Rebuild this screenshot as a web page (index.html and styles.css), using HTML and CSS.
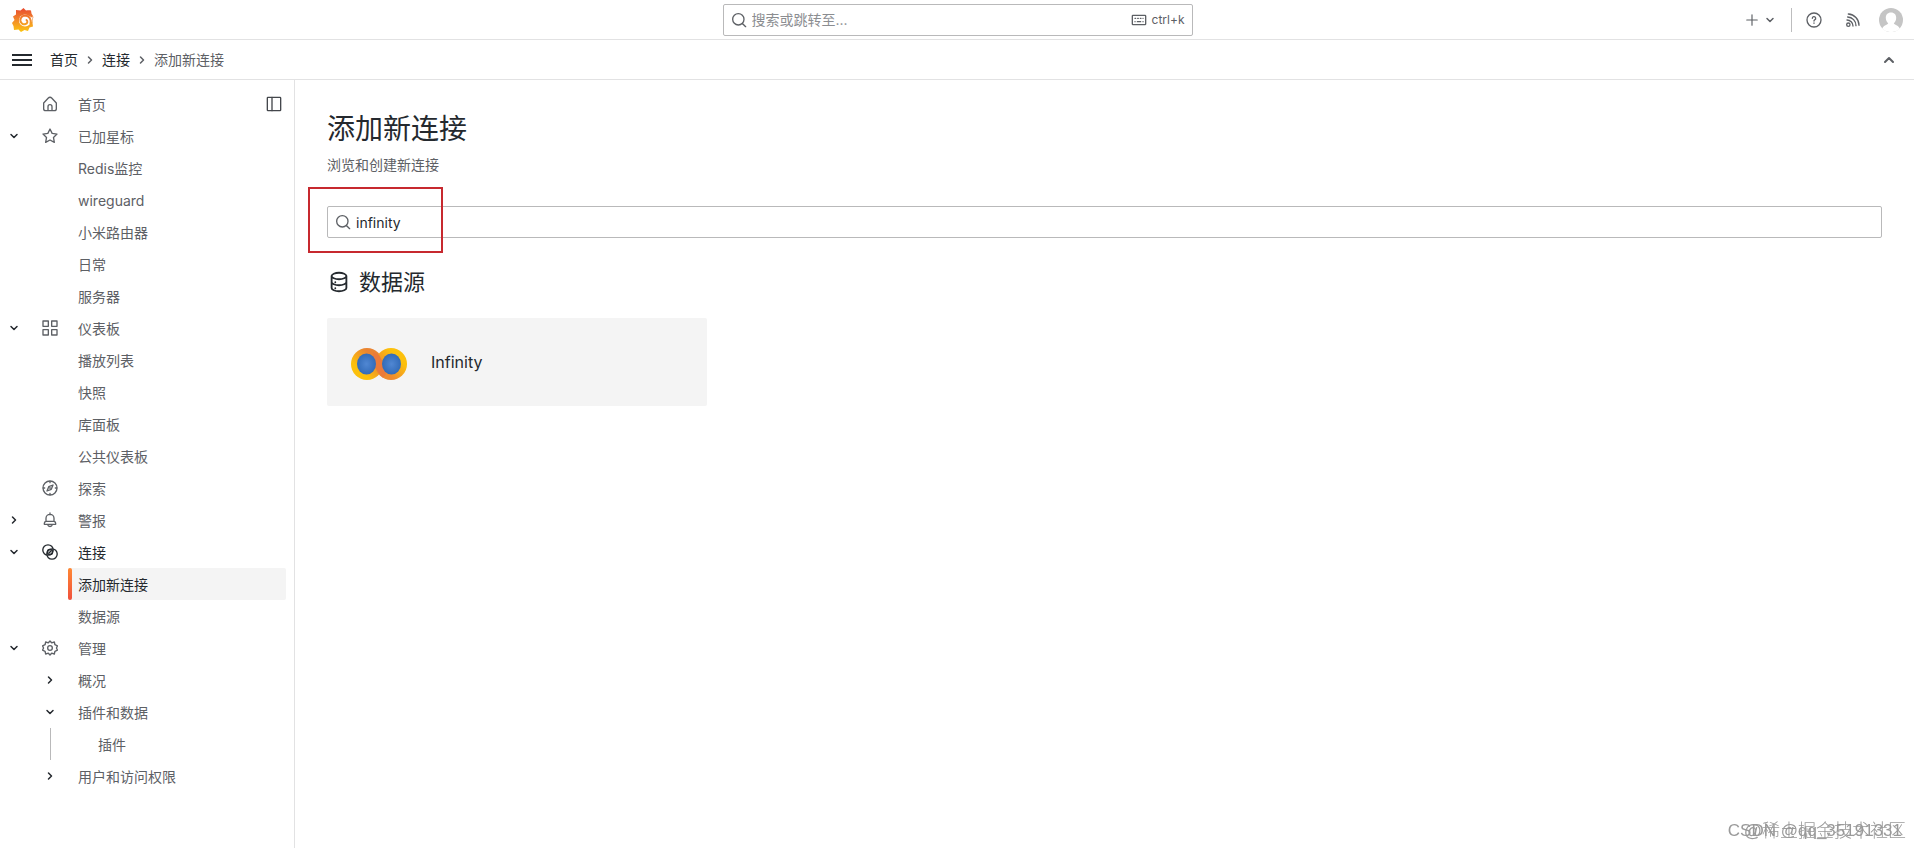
FILE: index.html
```html
<!DOCTYPE html>
<html lang="zh-CN">

<head>
	<meta charset="utf-8">
	<title>添加新连接 - 连接 - Grafana</title>
	<link rel="stylesheet" href="styles.css">
</head>

<body>
	<svg class="defs" aria-hidden="true">
		<symbol id="down" viewBox="0 0 16 16"><path d="M5 6.500L8 9.500l3-3"/></symbol>
		<symbol id="right" viewBox="0 0 16 16"><path d="M6.500 5L9.500 8l-3 3"/></symbol>
		<symbol id="search" viewBox="0 0 24 24"><circle cx="11" cy="11" r="8.500"/><path d="M17.500 17.500L22 22"/></symbol>
		<symbol id="home" viewBox="0 0 24 24"><path d="M2.500 10.500L9.500 3a3.400 3.400 0 0 1 5 0l7 7.500V19a3 3 0 0 1-3 3h-13a3 3 0 0 1-3-3zM9 22v-6a3 3 0 0 1 6 0v6"/></symbol>
		<symbol id="star" viewBox="0 0 24 24"><path d="M12 1.500l3.200 6.600 7.300 1-5.300 5.100 1.300 7.300-6.500-3.500-6.500 3.500 1.300-7.300-5.300-5.100 7.300-1z"/></symbol>
		<symbol id="apps" viewBox="0 0 24 24"><path d="M1.500 1.500h8v8h-8zM14.500 1.500h8v8h-8zM1.500 14.500h8v8h-8zM14.500 14.500h8v8h-8z"/></symbol>
		<symbol id="compass" viewBox="0 0 24 24"><circle cx="12" cy="12" r="10.500"/><path d="M16.500 7.500l-2.600 6.400-6.400 2.600 2.600-6.400zM12 2v2M12 20v2M2 12h2M20 12h2M11.500 12h1"/></symbol>
		<symbol id="bell" viewBox="0 0 24 24"><path d="M12 1.500V4M6 14V9.500a6 6 0 0 1 12 0V14M6 14a3 3 0 0 0-2.500 3v1.500h17V17a3 3 0 0 0-2.500-3zM6 14h12M8.500 19a3.600 3.600 0 0 0 7 0"/></symbol>
		<symbol id="link" viewBox="0 0 24 24"><circle cx="9" cy="9" r="7.800"/><circle cx="15" cy="15" r="7.800"/><circle cx="12" cy="12" r="3.800"/><path d="M10.500 13.500l3-3"/></symbol>
		<symbol id="cog" viewBox="0 0 24 24"><path d="M9.500 4.200L12 1.500l2.500 2.700 4-1.200.9 4.100 3.800 1.700-1.500 3.200 1.500 3.200-3.800 1.700-.9 4.100-4-1.200-2.500 2.700-2.500-2.700-4 1.200-.9-4.100-3.800-1.700L2.300 12 .8 8.800l3.800-1.700.9-4.100z"/><circle cx="12" cy="12" r="3.500"/></symbol>
		<symbol id="database" viewBox="-1 -1 26 26"><path d="M4 5.500C4 3.600 7.600 2 12 2s8 1.600 8 3.500v13c0 1.900-3.600 3.500-8 3.500s-8-1.600-8-3.500zM4 5.500C4 7.400 7.600 9 12 9s8-1.600 8-3.500M4 12c0 1.900 3.600 3.500 8 3.500s8-1.600 8-3.500M8 12.200v.1M8 18.700v.1"/></symbol>
	</svg>

	<header>
		<div class="topbar">
			<a class="logo" href="#" aria-label="Grafana">
				<svg viewBox="0 0 44 48">
					<defs>
						<linearGradient id="flame" x1="0" y1="48" x2="0" y2="0" gradientUnits="userSpaceOnUse">
							<stop offset="0" stop-color="#fcc50f"/>
							<stop offset=".5" stop-color="#f28a2b"/>
							<stop offset="1" stop-color="#e8492f"/>
						</linearGradient>
					</defs>
					<path fill="url(#flame)" d="M23 0l5 5c4-1 7-1 10 0l1 6c2 3 4 6 4 10-1-3-2-4-3-5 2 6 2 11 1 14l1 7-7 2-3 7-7-2-7 4-5-5-9 1-1-8-3-6 5-6-3-7 6-4V4l9 1z"/>
					<circle cx="26" cy="25" r="12" fill="#fff"/>
					<path fill="#fff" d="M36 17l4 2 1 8-4 2z"/>
					<path class="curl" d="M37 31c2-8-2-15-10-16-7 0-11 5-10 11 1 5 6 8 10 6 4-1 5-6 2-8"/>
				</svg>
			</a>
			<label class="search jump">
				<svg class="icon"><use href="#search"/></svg>
				<input type="text" placeholder="搜索或跳转至..." aria-label="搜索或跳转至">
				<svg class="icon keyboard" viewBox="0 0 24 24"><rect x="2" y="5" width="20" height="14" rx="1"/><path d="M6 9.500h1M10 9.500h1M14 9.500h1M18 9.500h.1M6 14.500h.1M9.500 14.500h5M18 14.500h.1"/></svg>
				<kbd>ctrl+k</kbd>
			</label>
			<div class="actions">
				<button class="new" aria-label="新建">
					<svg class="icon" viewBox="0 0 24 24"><path d="M12 3v18M3 12h18"/></svg>
					<svg class="chevron"><use href="#down"/></svg>
				</button>
				<button class="help" aria-label="帮助">
					<svg class="icon" viewBox="0 0 24 24"><circle cx="12" cy="12" r="10.500"/><path d="M9.500 9.500a2.500 2.500 0 1 1 3.500 2.300q-1 .5-1 1.700M12 16.500v.5"/></svg>
				</button>
				<button class="news" aria-label="新闻">
					<svg class="icon" viewBox="0 0 24 24"><circle cx="5" cy="19" r="2.500"/><path d="M3 12a9 9 0 0 1 9 9M4 7.500A13 13 0 0 1 16.500 20.500M5 3a17 17 0 0 1 16 17"/></svg>
				</button>
				<button class="avatar" aria-label="个人资料">
					<svg viewBox="0 0 24 24"><circle cx="12" cy="12" r="12" fill="#c5c5c5"/><path fill="#fff" d="M12 4.500c-3.500 0-5.200 2.500-5.200 5.200 0 2.300 1 4.300 2.400 5.500-.4 1.800-4.700 1.700-6 5.600A12 12 0 0 0 12 24a12 12 0 0 0 8.800-3.200c-1.300-3.900-5.600-3.800-6-5.600 1.400-1.200 2.400-3.200 2.400-5.500 0-2.700-1.700-5.200-5.200-5.200z"/></svg>
				</button>
			</div>
		</div>
		<div class="crumbbar">
			<button class="menu" aria-label="菜单"><span></span><span></span><span></span></button>
			<nav class="crumbs" aria-label="导航路径">
				<a href="#">首页</a>
				<svg class="chevron"><use href="#right"/></svg>
				<a href="#">连接</a>
				<svg class="chevron"><use href="#right"/></svg>
				<span>添加新连接</span>
			</nav>
			<button class="collapse" aria-label="收起">
				<svg class="chevron" viewBox="0 0 16 16"><path d="M4 10l4-4 4 4"/></svg>
			</button>
		</div>
	</header>

	<div class="page">
		<nav class="sidebar" aria-label="主菜单">
			<ul>
				<li class="item">
					<svg class="icon"><use href="#home"/></svg>
					<a href="#">首页</a>
					<button class="dock" aria-label="取消停靠菜单">
						<svg class="icon" viewBox="0 0 24 24"><rect x="2" y="2" width="20" height="20" rx="1"/><path d="M9 2v20"/></svg>
					</button>
				</li>
				<li class="item">
					<button class="toggle" aria-label="收起已加星标"><svg class="chevron"><use href="#down"/></svg></button>
					<svg class="icon"><use href="#star"/></svg>
					<a href="#">已加星标</a>
				</li>
				<li class="item"><a href="#">Redis监控</a></li>
				<li class="item"><a href="#">wireguard</a></li>
				<li class="item"><a href="#">小米路由器</a></li>
				<li class="item"><a href="#">日常</a></li>
				<li class="item"><a href="#">服务器</a></li>
				<li class="item">
					<button class="toggle" aria-label="收起仪表板"><svg class="chevron"><use href="#down"/></svg></button>
					<svg class="icon"><use href="#apps"/></svg>
					<a href="#">仪表板</a>
				</li>
				<li class="item"><a href="#">播放列表</a></li>
				<li class="item"><a href="#">快照</a></li>
				<li class="item"><a href="#">库面板</a></li>
				<li class="item"><a href="#">公共仪表板</a></li>
				<li class="item">
					<svg class="icon"><use href="#compass"/></svg>
					<a href="#">探索</a>
				</li>
				<li class="item">
					<button class="toggle" aria-label="展开警报"><svg class="chevron"><use href="#right"/></svg></button>
					<svg class="icon"><use href="#bell"/></svg>
					<a href="#">警报</a>
				</li>
				<li class="item current">
					<button class="toggle" aria-label="收起连接"><svg class="chevron"><use href="#down"/></svg></button>
					<svg class="icon"><use href="#link"/></svg>
					<a href="#">连接</a>
				</li>
				<li class="item active"><a href="#" aria-current="page">添加新连接</a></li>
				<li class="item"><a href="#">数据源</a></li>
				<li class="item">
					<button class="toggle" aria-label="收起管理"><svg class="chevron"><use href="#down"/></svg></button>
					<svg class="icon"><use href="#cog"/></svg>
					<a href="#">管理</a>
				</li>
				<li class="item">
					<button class="toggle sub" aria-label="展开概况"><svg class="chevron"><use href="#right"/></svg></button>
					<a href="#">概况</a>
				</li>
				<li class="item">
					<button class="toggle sub" aria-label="收起插件和数据"><svg class="chevron"><use href="#down"/></svg></button>
					<a href="#">插件和数据</a>
				</li>
				<li class="item nested"><span class="guide"></span><a href="#">插件</a></li>
				<li class="item">
					<button class="toggle sub" aria-label="展开用户和访问权限"><svg class="chevron"><use href="#right"/></svg></button>
					<a href="#">用户和访问权限</a>
				</li>
			</ul>
		</nav>

		<main>
			<h1>添加新连接</h1>
			<p class="subtitle">浏览和创建新连接</p>
			<div class="filter">
				<label class="search">
					<svg class="icon"><use href="#search"/></svg>
					<input type="text" value="infinity" aria-label="搜索连接">
				</label>
				<span class="highlight"></span>
			</div>
			<h2><svg class="icon"><use href="#database"/></svg>数据源</h2>
			<div class="cards">
				<a class="card" href="#">
					<svg class="infinity" viewBox="0 0 56 32">
						<defs>
							<linearGradient id="ringLeft" x1="0" y1="1" x2="1" y2="0">
								<stop offset=".3" stop-color="#fcc00c"/>
								<stop offset=".7" stop-color="#ea8432"/>
							</linearGradient>
							<linearGradient id="ringRight" x1="0" y1="1" x2="1" y2="0">
								<stop offset=".3" stop-color="#ee8a2e"/>
								<stop offset=".7" stop-color="#fcc00c"/>
							</linearGradient>
							<radialGradient id="lens">
								<stop offset="0" stop-color="#5087d3"/>
								<stop offset="1" stop-color="#326bb8"/>
							</radialGradient>
						</defs>
						<circle cx="16" cy="16" r="16" fill="url(#ringLeft)"/>
						<circle cx="40" cy="16" r="16" fill="url(#ringRight)"/>
						<path d="M22 4l6 3 5 9 2 10-3 4-5-6-5-8z" fill="#eb7a3a"/>
						<ellipse cx="15.500" cy="16" rx="9.500" ry="10.500" fill="url(#lens)"/>
						<ellipse cx="40.500" cy="16" rx="9.500" ry="10.500" fill="url(#lens)"/>
					</svg>
					<span>Infinity</span>
				</a>
			</div>
		</main>
	</div>

	<div class="watermark">
		<span class="csdn">CSDN @qq_35191331</span>
		<span>@稀土掘金技术社区</span>
	</div>
</body>

</html>
```

FILE: styles.css
```css
* {
	box-sizing: border-box;
}

body {
	display: flex;
	flex-direction: column;
	min-height: 100vh;
	margin: 0;
	background: #fff;
	color: #24292e;
	font-family: Inter, "Noto Sans CJK SC", sans-serif;
	font-size: 14px;
	line-height: 22px;
}

a {
	color: inherit;
	text-decoration: none;
}

button {
	display: flex;
	align-items: center;
	justify-content: center;
	padding: 0;
	border: 0;
	background: none;
	color: inherit;
	cursor: pointer;
}

.defs {
	position: absolute;
	width: 0;
	height: 0;
}

.icon,
.chevron {
	flex: none;
	width: 16px;
	height: 16px;
	fill: none;
	stroke: currentColor;
	stroke-width: 2;
	stroke-linecap: round;
	stroke-linejoin: round;
}

.chevron {
	stroke-width: 1.5;
}

/* header */

.topbar,
.crumbbar {
	display: flex;
	align-items: center;
	height: 40px;
	padding: 0 12px;
	border-bottom: 1px solid #e2e2e3;
}

.topbar {
	display: grid;
	grid-template-columns: 1fr 2fr 1fr;
	padding-right: 11px;
}

.logo svg {
	display: block;
	width: 22px;
	height: 24px;
}

.curl {
	fill: none;
	stroke: url(#flame);
	stroke-width: 4;
	stroke-linecap: round;
}

.search {
	display: flex;
	align-items: center;
	gap: 5px;
	height: 32px;
	padding: 0 7px;
	border: 1px solid #b9b9ba;
	border-radius: 2px;
	color: #5d6065;
}

.search input {
	flex: 1;
	min-width: 0;
	padding: 2px 0 0;
	border: 0;
	outline: 0;
	background: none;
	color: #24292e;
	font: inherit;
}

.search input::placeholder {
	color: #8b8d91;
}

.jump {
	justify-self: center;
	width: 100%;
	max-width: 470px;
}

.jump input {
	padding: 0;
}

kbd {
	font-family: inherit;
	font-size: 12px;
}

.actions {
	display: flex;
	align-items: center;
	justify-content: flex-end;
	color: #5d6065;
}

.new {
	gap: 3px;
	height: 24px;
	padding-right: 13px;
	border-right: 1px solid #bdbdbe;
}

.new .icon {
	width: 14px;
	height: 14px;
}

.help {
	margin-left: 14px;
}

.news {
	margin: 0 18px 0 23px;
}

.avatar svg {
	width: 24px;
	height: 24px;
}

.menu {
	flex-direction: column;
	gap: 3px;
	width: 20px;
	margin-right: 18px;
}

.menu span {
	width: 20px;
	height: 2px;
	background: #24292e;
}

.crumbs {
	display: flex;
	align-items: center;
	gap: 4px;
}

.crumbs .chevron,
.crumbs span {
	color: #5d6065;
}

.collapse {
	margin-left: auto;
	padding-right: 5px;
	color: #5d6065;
}

.collapse .chevron {
	stroke-width: 2;
}

/* sidebar */

.page {
	display: flex;
	flex: 1;
}

.sidebar {
	flex: none;
	width: 295px;
	padding: 8px 8px 8px 0;
	border-right: 1px solid #e2e2e3;
	color: #5d6065;
}

.sidebar ul {
	margin: 0;
	padding: 0;
	list-style: none;
}

.item {
	display: grid;
	grid-template-columns: 28px 44px 1fr auto;
	align-items: center;
	height: 32px;
}

.item > * {
	grid-row: 1;
}

.item > .icon {
	grid-column: 2;
	justify-self: center;
}

.item > a {
	grid-column: 3;
	padding: 6px 6px 4px;
}

.toggle {
	grid-column: 1;
	color: #24292e;
}

.sub {
	grid-column: 2;
}

.dock {
	grid-column: 4;
	margin-right: 4px;
	color: #44474c;
}

.current {
	color: #24292e;
}

.active {
	margin-left: 68px;
	grid-template-columns: 4px 1fr;
	border-radius: 2px;
	background: #f4f4f4;
	color: #24292e;
}

.active::before {
	content: "";
	height: 32px;
	border-radius: 2px;
	background: linear-gradient(#ff8833, #f0503c);
}

.active > a {
	grid-column: 2;
}

.guide {
	grid-column: 2;
	justify-self: center;
	width: 1px;
	height: 32px;
	background: #b9b9ba;
}

.nested > a {
	padding-left: 26px;
}

/* content */

main {
	flex: 1;
	min-width: 0;
	padding: 32px;
}

h1,
h2 {
	margin: 0;
	font-weight: 400;
}

h1 {
	font-size: 28px;
	line-height: 34px;
}

.subtitle {
	margin: 8px 0 30px;
	color: #5d6065;
}

.filter {
	position: relative;
}

.highlight {
	position: absolute;
	top: -19px;
	left: -19px;
	width: 135px;
	height: 66px;
	border: 2px solid #c7292f;
	pointer-events: none;
}

h2 {
	display: flex;
	align-items: center;
	gap: 8px;
	margin: 32px 0 24px;
	font-size: 22px;
	line-height: 24px;
}

h2 .icon {
	width: 24px;
	height: 24px;
}

.cards {
	display: grid;
	grid-template-columns: repeat(auto-fill, minmax(318px, 1fr));
	gap: 12px;
}

.card {
	display: flex;
	align-items: center;
	gap: 24px;
	height: 88px;
	padding: 0 24px;
	border-radius: 2px;
	background: #f4f4f4;
	font-size: 16px;
}

.infinity {
	width: 56px;
	height: 32px;
	margin-top: 4px;
}

/* both marks share one corner and overlap */

.watermark {
	position: fixed;
	right: 8px;
	bottom: 6px;
	display: grid;
	justify-items: end;
	color: #9a9a9a;
	font-family: "Liberation Sans", "Noto Sans CJK SC", sans-serif;
	font-size: 18px;
	font-weight: 300;
	pointer-events: none;
}

.watermark span {
	grid-area: 1 / 1;
}

.watermark .csdn {
	padding-right: 4px;
	font-size: 17px;
}
```
